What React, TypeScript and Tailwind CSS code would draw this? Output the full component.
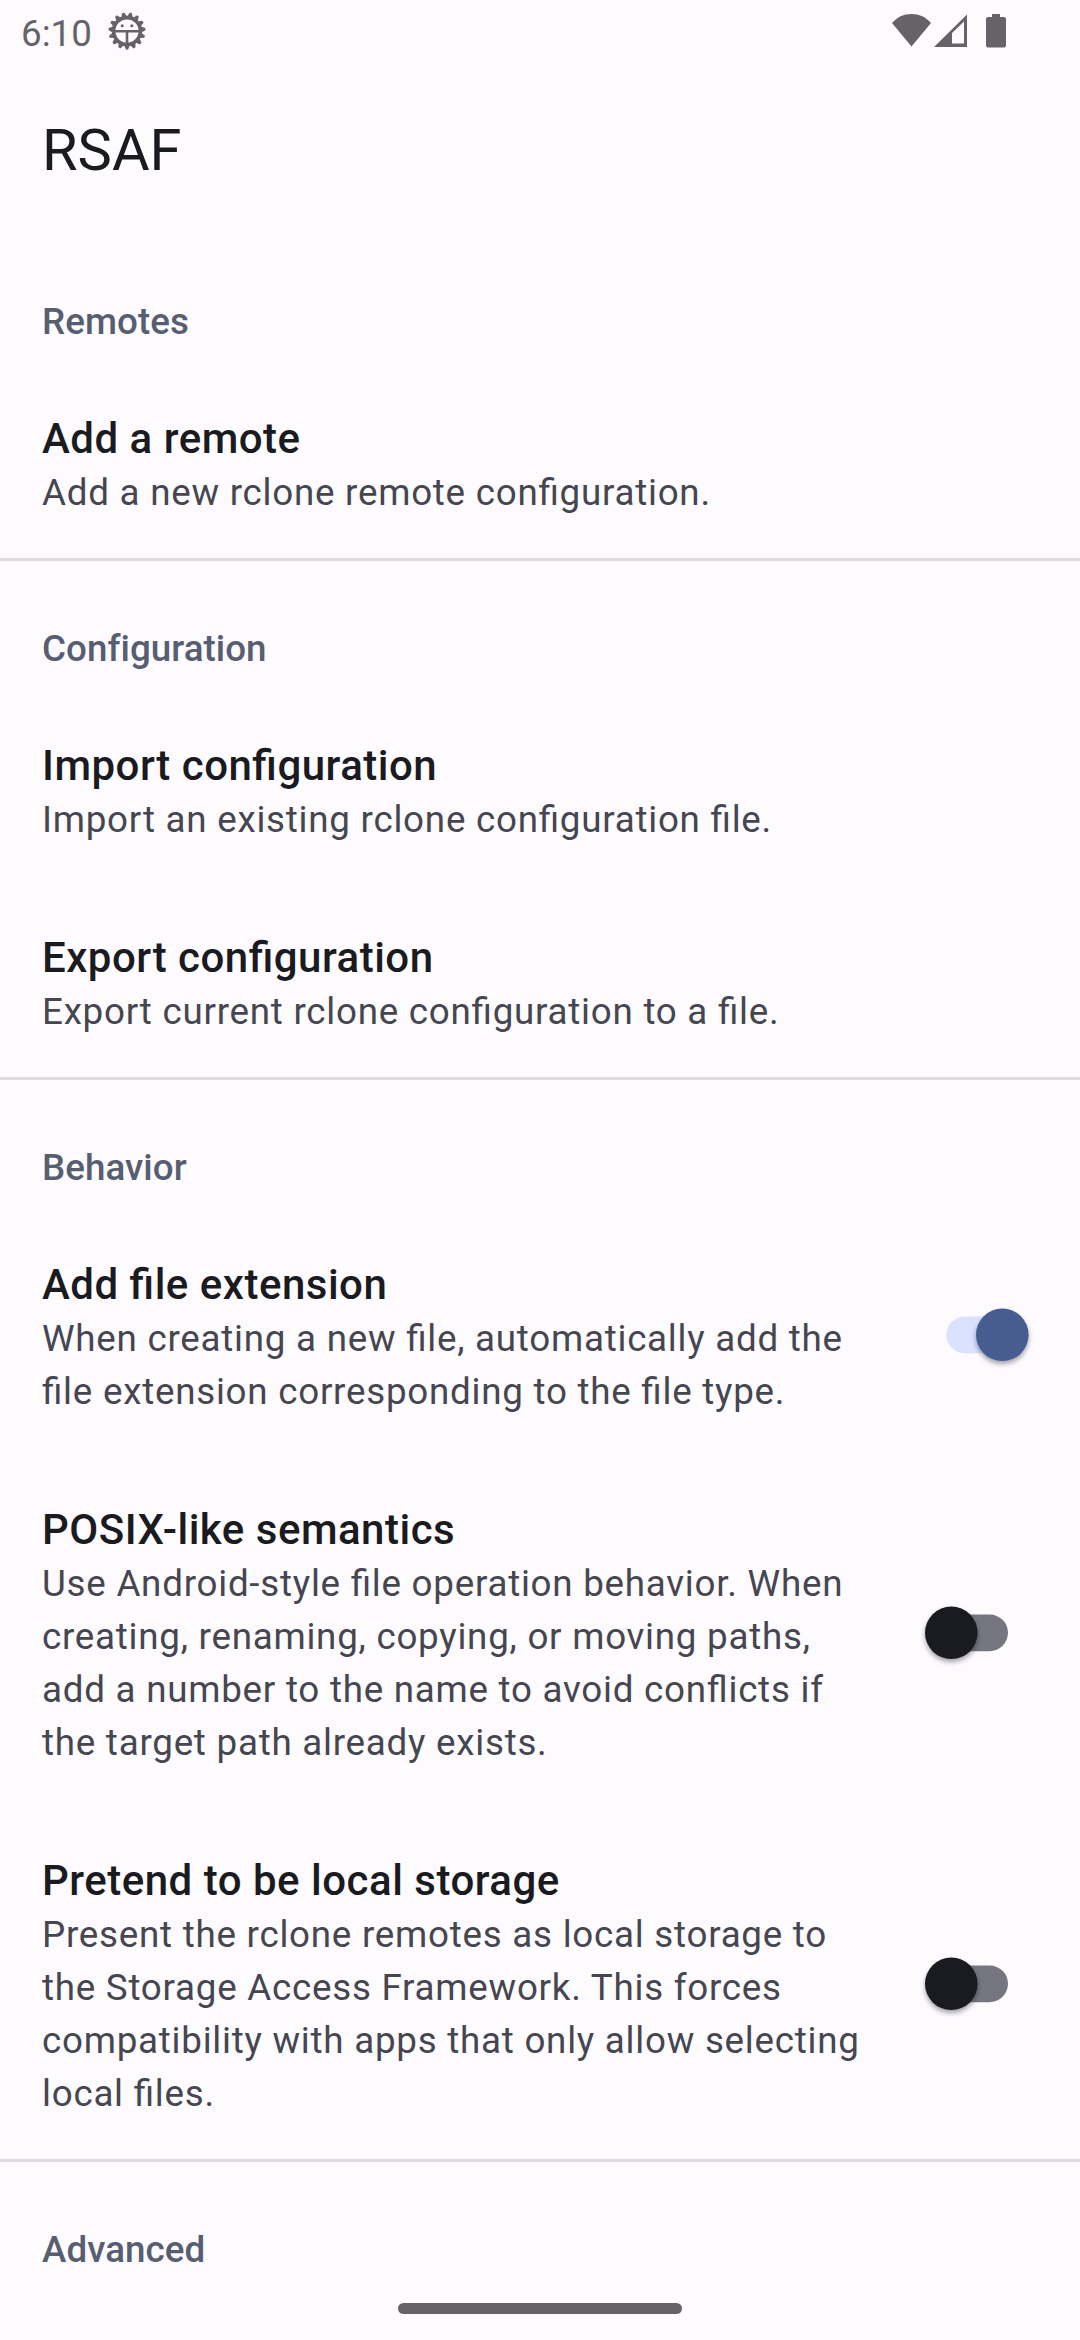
import React from "react";

function SectionTitle({ children }: { children: string }) {
  return (
    <h2 className="h-[135px] pl-[42px] pt-[63px] text-[36.75px] leading-[49px] font-medium tracking-[0.05px] text-[#575e71]">
      {children}
    </h2>
  );
}

function Switch({ on }: { on: boolean }) {
  return (
    <svg
      role="switch"
      aria-checked={on}
      className="mr-[40px] h-[126px] w-[126px] shrink-0 overflow-visible"
      viewBox="0 0 126 126"
    >
      <rect x="32.3" y="41.5" width="61.7" height="36.7" rx="18.35" fill={on ? "#d9e2ff" : "#75767f"} />
      <circle
        className="[filter:drop-shadow(0_3px_2.5px_rgba(0,0,0,0.36))]"
        cx={on ? 88.3 : 37.3}
        cy="59.8"
        r="26.3"
        fill={on ? "#475d92" : "#1a1b20"}
      />
    </svg>
  );
}

type ItemProps = { title: string; lines: string[]; checked?: boolean; last?: boolean };

function Item({ title, lines, checked, last }: ItemProps) {
  return (
    <div
      className={
        last
          ? "flex items-center justify-between border-b-[3px] border-[#dedce0] pt-[42px] pb-[39px] pl-[42px]"
          : "flex items-center justify-between py-[42px] pl-[42px]"
      }
    >
      <div className="[font-feature-settings:'liga'_1]">
        <div className="text-[42px] leading-[55px] font-medium tracking-[0.5px] text-[#1a1b20]">{title}</div>
        {lines.map((line) => (
          <div key={line} className="text-[36.75px] leading-[53px] tracking-[0.75px] whitespace-nowrap text-[#45464f]">
            {line}
          </div>
        ))}
      </div>
      {checked !== undefined && <Switch on={checked} />}
    </div>
  );
}

const TEETH = Array.from({ length: 15 }, (_, i) => 90 + i * 24);

function GearIcon() {
  return (
    <svg className="ml-[16px] h-[38px] w-[38px]" viewBox="-19 -19 38 38">
      <g fill="#656366">
        {TEETH.map((a) => (
          <path key={a} d="M12.5-3.6L17-1.7A1.700 1.700 0 0 1 17 1.7L12.5 3.6Z" transform={`rotate(${a})`} />
        ))}
      </g>
      <circle r="13.4" fill="none" stroke="#656366" strokeWidth="3.6" />
      <path d="M-13 .3H13M0 .3V13" stroke="#656366" strokeWidth="2.6" />
      <circle cx="-4.800" cy="-5.2" r="1.5" fill="#656366" />
      <circle cx="4.800" cy="-5.2" r="1.5" fill="#656366" />
    </svg>
  );
}

function StatusBar() {
  return (
    <div className="flex h-[120px] items-start pt-[12px] pl-[21px] text-[#656366]">
      <span className="text-[36.75px] leading-[43px]">6:10</span>
      <GearIcon />
      <svg className="ml-auto mr-[74px] h-[36px] w-[114px]" viewBox="0 0 114 36" fill="#656366">
        <path d="M0 11C5 5.200 12 2 19.500 2S34 5.200 39 11L19.500 34.500Z" />
        <path fillRule="evenodd" d="M75 2.500V35H42ZM72 9.500L60 21V31.500H72Z" />
        <path d="M100 2h8v3h4a2 2 0 0 1 2 2v26.500a2 2 0 0 1-2 2H96a2 2 0 0 1-2-2V7a2 2 0 0 1 2-2h4Z" />
      </svg>
    </div>
  );
}

export default function App() {
  return (
    <div className="relative h-[2340px] w-[1080px] overflow-hidden bg-[#fefbff] font-['Roboto',sans-serif]">
      <StatusBar />
      <h1 className="h-[114px] pl-[42px] text-[57.75px] leading-[60px] text-[#1a1b20]">RSAF</h1>

      <SectionTitle>Remotes</SectionTitle>
      <Item title="Add a remote" lines={["Add a new rclone remote configuration."]} last />

      <SectionTitle>Configuration</SectionTitle>
      <Item title="Import configuration" lines={["Import an existing rclone configuration file."]} />
      <Item title="Export configuration" lines={["Export current rclone configuration to a file."]} last />

      <SectionTitle>Behavior</SectionTitle>
      <Item
        title="Add file extension"
        checked={true}
        lines={["When creating a new file, automatically add the", "file extension corresponding to the file type."]}
      />
      <Item
        title="POSIX-like semantics"
        checked={false}
        lines={[
          "Use Android-style file operation behavior. When",
          "creating, renaming, copying, or moving paths,",
          "add a number to the name to avoid conflicts if",
          "the target path already exists.",
        ]}
      />
      <Item
        title="Pretend to be local storage"
        checked={false}
        last
        lines={[
          "Present the rclone remotes as local storage to",
          "the Storage Access Framework. This forces",
          "compatibility with apps that only allow selecting",
          "local files.",
        ]}
      />

      <SectionTitle>Advanced</SectionTitle>

      <div className="absolute bottom-[26px] left-[398px] h-[11px] w-[284px] rounded-full bg-[#656366]" />
    </div>
  );
}
